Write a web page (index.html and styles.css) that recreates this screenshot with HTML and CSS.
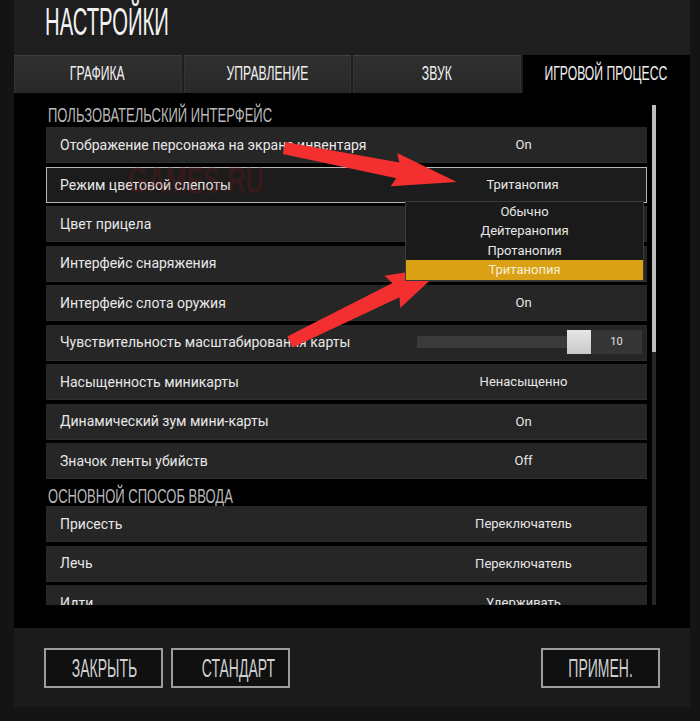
FILE: index.html
```html
<!DOCTYPE html>
<html lang="ru">
<head>
  <meta charset="UTF-8" />
  <title>Настройки</title>
  <link rel="stylesheet" href="styles.css">
</head>
<body>

  <div class="screen">
    <div class="window">
      <h1 class="title"><span class="cond">НАСТРОЙКИ</span></h1>

      <div class="tabs">
        <div class="tab"><span class="cond">ГРАФИКА</span></div>
        <div class="tab"><span class="cond">УПРАВЛЕНИЕ</span></div>
        <div class="tab"><span class="cond">ЗВУК</span></div>
        <div class="tab active"><span class="cond">ИГРОВОЙ ПРОЦЕСС</span></div>
      </div>

      <div class="content">
        <div class="list">
          <div class="section first"><span class="cond">ПОЛЬЗОВАТЕЛЬСКИЙ ИНТЕРФЕЙС</span></div>

          <div class="row">
            <span class="label">Отображение персонажа на экране инвентаря</span>
            <span class="value">On</span>
          </div>
          <div class="row selected">
            <span class="label">Режим цветовой слепоты</span>
            <span class="value">Тританопия</span>
            <div class="dropdown">
              <div class="option">Обычно</div>
              <div class="option">Дейтеранопия</div>
              <div class="option">Протанопия</div>
              <div class="option current">Тританопия</div>
            </div>
          </div>
          <div class="row">
            <span class="label">Цвет прицела</span>
            <span class="value"></span>
          </div>
          <div class="row">
            <span class="label">Интерфейс снаряжения</span>
            <span class="value"></span>
          </div>
          <div class="row">
            <span class="label">Интерфейс слота оружия</span>
            <span class="value">On</span>
          </div>
          <div class="row">
            <span class="label">Чувствительность масштабирования карты</span>
            <span class="value slider">
              <span class="track"></span>
              <span class="handle"></span>
              <span class="slider-num">10</span>
            </span>
          </div>
          <div class="row">
            <span class="label">Насыщенность миникарты</span>
            <span class="value">Ненасыщенно</span>
          </div>
          <div class="row">
            <span class="label">Динамический зум мини-карты</span>
            <span class="value">On</span>
          </div>
          <div class="row">
            <span class="label">Значок ленты убийств</span>
            <span class="value">Off</span>
          </div>

          <div class="section second"><span class="cond">ОСНОВНОЙ СПОСОБ ВВОДА</span></div>

          <div class="row">
            <span class="label">Присесть</span>
            <span class="value">Переключатель</span>
          </div>
          <div class="row">
            <span class="label">Лечь</span>
            <span class="value">Переключатель</span>
          </div>
          <div class="row">
            <span class="label">Идти</span>
            <span class="value">Удерживать</span>
          </div>
        </div>

        <div class="scrollbar"><div class="thumb"></div></div>
      </div>

      <div class="footer">
        <div class="btn-group">
          <button class="btn"><span class="cond">ЗАКРЫТЬ</span></button>
          <button class="btn"><span class="cond">СТАНДАРТ</span></button>
        </div>
        <button class="btn"><span class="cond">ПРИМЕН.</span></button>
      </div>
    </div>

    <div class="watermark">GAMES.RU</div>

    <!-- red arrows drawn over the screenshot -->
    <svg class="arrows" width="700" height="721" viewBox="0 0 700 721">
      <polygon transform="translate(284,148) rotate(11.1)"
               points="0,-6 116,-8 112,-17 176,0 112,17 116,8 0,6" fill="#f42f2f" />
      <polygon transform="translate(290,342) rotate(-26.1)"
               points="0,-6 118,-8 114,-18 173,0 114,18 118,8 0,6" fill="#f42f2f" />
    </svg>
  </div>

</body>
</html>
```

FILE: styles.css
```css
body {
  margin: 0;
  background: #141414;
  font-family: Roboto, 'Noto Sans', sans-serif;
  color: #e8e8e8;
}

.screen {
  position: relative;
  width: 700px;
  height: 721px;
  overflow: hidden;
}

.window {
  margin-left: 14px;
  width: 676px;
  background: #1e1e1e;
}

/* condensed game font imitation */
.cond {
  display: inline-block;
  font-family: 'Liberation Sans', sans-serif;
  white-space: nowrap;
  transform: scaleX(0.58);
  transform-origin: center center;
}

.title {
  margin: 0;
  height: 55px;
  padding-left: 31px;
  font-size: 39px;
  font-weight: normal;
  line-height: 43px;
  color: #f2f2f2;
}

.title .cond {
  font-size: 39px;
  transform: scaleX(0.52);
  transform-origin: left center;
}

.tabs {
  display: grid;
  grid-template-columns: repeat(4, minmax(0, 1fr));
  gap: 2px;
  height: 38px;
}

.tab {
  box-sizing: border-box;
  display: flex;
  justify-content: center;
  height: 38px;
  background: linear-gradient(#303030, #282828);
  border-top: 1px solid #3f3f3f;
  border-left: 1px solid #333;
  border-right: 1px solid #333;
  font-size: 21px;
  line-height: 34px;
  color: #f0f0f0;
}

.tab .cond {
  flex-shrink: 0;
}

.tab.active {
  background: #000;
  border-color: #000;
}

.content {
  display: flex;
  height: 535px;
  background: #000;
  padding-left: 32px;
  box-sizing: border-box;
}

.list {
  width: 601px;
  height: 512px;
  overflow: hidden;
}

.section {
  box-sizing: border-box;
  padding-left: 2px;
  font-size: 21px;
  line-height: 21px;
  color: #b9b9b9;
}

.section .cond {
  transform: scaleX(0.62);
  transform-origin: left center;
}

.section.first {
  height: 34px;
  padding-top: 11px;
}

.section.second {
  height: 23.5px;
  padding-top: 2px;
}

.row {
  position: relative;
  box-sizing: border-box;
  display: flex;
  align-items: center;
  height: 36px;
  margin-bottom: 3.5px;
  background: #262626;
  border-bottom: 1px solid #2e2e2e;
}

.row.selected {
  background: #1c1c1c;
  border: 1px solid #b8b8b8;
}

.label {
  flex: 1;
  padding-left: 14px;
  font-size: 14px;
  color: #e8e8e8;
  white-space: nowrap;
}

.value {
  width: 247px;
  text-align: center;
  font-size: 13px;
  color: #e6e6e6;
}

.row.selected .label {
  padding-left: 13px;
}

.slider {
  display: flex;
  align-items: center;
  box-sizing: border-box;
  padding-left: 17px;
}

.track {
  width: 150px;
  height: 12px;
  background: #3a3a3a;
}

.handle {
  width: 24px;
  height: 24px;
  background: linear-gradient(#e6e6e6, #c9c9c9);
}

.slider-num {
  width: 51px;
  height: 24px;
  line-height: 24px;
  background: #353535;
  font-size: 11px;
  color: #e0e0e0;
}

.dropdown {
  position: absolute;
  left: 358px;
  top: 33px;
  width: 237px;
  background: #1a1a1a;
  border: 1px solid #3a3a3a;
  z-index: 2;
}

.option {
  height: 19.5px;
  line-height: 19.5px;
  text-align: center;
  font-size: 13px;
  color: #e6e6e6;
}

.option.current {
  background: #dba114;
  color: #f6eedb;
}

.scrollbar {
  width: 4px;
  height: 500px;
  margin-top: 12px;
  margin-left: 5px;
  background: #262626;
}

.thumb {
  height: 247px;
  background: #bdbdbd;
}

.footer {
  display: flex;
  justify-content: space-between;
  align-items: flex-start;
  box-sizing: border-box;
  height: 79px;
  padding: 20px 30px 0 30px;
  background: #1b1b1b;
}

.btn-group {
  display: flex;
  gap: 8px;
}

.btn {
  box-sizing: border-box;
  width: 119px;
  height: 40px;
  padding: 0;
  background: #101010;
  border: 2px solid #9c9c9c;
  font-size: 25px;
  line-height: 36px;
  color: #cfcfcf;
  cursor: pointer;
}

.btn .cond {
  transform: scaleX(0.56);
}

.watermark {
  position: absolute;
  left: 128px;
  top: 160px;
  font-family: 'Liberation Sans', sans-serif;
  font-weight: bold;
  font-size: 36px;
  color: rgba(140, 20, 20, 0.22);
  transform: scaleX(0.7);
  transform-origin: left center;
  pointer-events: none;
}

.arrows {
  position: absolute;
  left: 0;
  top: 0;
  pointer-events: none;
}
```
